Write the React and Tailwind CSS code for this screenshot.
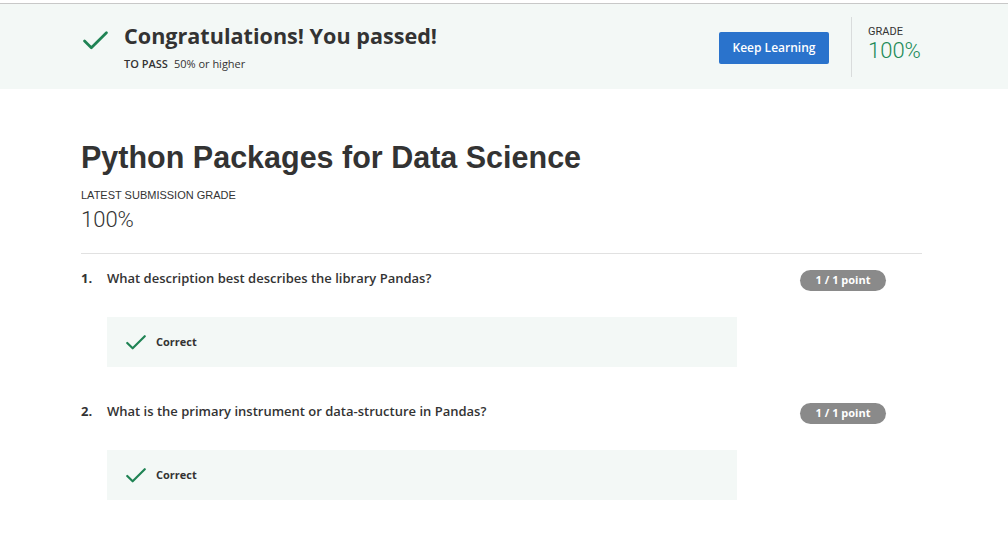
import React from 'react';

const Check = ({ className }) => (
  <svg viewBox="0 0 24 18" className={className} fill="none">
    <path d="M1.5 9.5 L8 16 L22.5 1.5" stroke="#1f8354" strokeWidth="2.6" strokeLinecap="round" strokeLinejoin="round" />
  </svg>
);

const questions = [
  { num: '1.', text: 'What description best describes the library Pandas?' },
  { num: '2.', text: 'What is the primary instrument or data-structure in Pandas?' },
];

const Question = ({ num, text }) => (
  <div className="mb-[34px]">
    <div className="flex items-start">
      <div className="w-[26px] text-[13px] leading-5 font-bold text-[#333]">{num}</div>
      <div className="flex-1 text-[13px] leading-5 font-semibold text-[#333]">{text}</div>
      <div className="mt-[2px] mr-[36px] w-[86px] h-[21px] rounded-full bg-[#8a8a8a] flex items-center justify-center text-[11px] font-bold text-white">
        1 / 1 point
      </div>
    </div>
    {/* correct answer feedback */}
    <div className="ml-[26px] mt-[26px] w-[630px] h-[50px] bg-[#f3f8f6] flex items-center pl-[19px]">
      <Check className="w-[20px] h-[15px]" />
      <span className="ml-[10px] text-[11px] font-bold text-[#333]">Correct</span>
    </div>
  </div>
);

const App = () => {
  return (
    <div className="min-h-[544px] bg-white font-['Open_Sans',sans-serif] text-[#333]">
      <div className="h-[3px] bg-white" />
      <div className="border-t border-[#c8c8c8] bg-[#f3f8f6] h-[86px]">
        <div className="ml-[81px] w-[842px] h-full flex items-center">
          <div className="flex-1 flex items-start self-start pt-[16px]">
            <Check className="w-[25px] h-[19px] mt-[11px] ml-[2px]" />
            <div className="ml-[16px]">
              <h1 className="text-[21.6px] leading-8 font-bold text-[#333]">Congratulations! You passed!</h1>
              <div className="mt-[4px] text-[11px] leading-4">
                <span className="font-semibold">TO PASS</span>
                <span className="ml-[6px]">50% or higher</span>
              </div>
            </div>
          </div>
          <button className="w-[110px] h-[32px] mt-[2px] rounded-[2px] bg-[#2a73cc] text-white text-[12px] font-semibold">
            Keep Learning
          </button>
          <div className="ml-[22px] h-[60px] border-l border-[#d9dcdc] pl-[16px] w-[72px] font-['Roboto',sans-serif]">
            <div className="mt-[8px] text-[11px] leading-[14px] text-[#333]">GRADE</div>
            <div className="text-[22px] leading-[24px] font-light text-[#218a57]">100%</div>
          </div>
        </div>
      </div>

      <div className="ml-[81px] w-[841px]">
        <h2 className="mt-[50px] text-[30.5px] leading-9 font-bold font-['Liberation_Sans',Arial,sans-serif] text-[#333]">
          Python Packages for Data Science
        </h2>
        <div className="mt-[12px] text-[11px] leading-4 font-['Liberation_Sans',Arial,sans-serif] text-[#333]">LATEST SUBMISSION GRADE</div>
        <div className="mt-[3px] text-[22px] leading-7 font-light font-['Roboto',sans-serif] text-[#333]">100%</div>
        <div className="mt-[19px] border-t border-[#e1e1e1]" />
        <div className="pt-[14px]">
          {questions.map((q) => (
            <Question key={q.num} num={q.num} text={q.text} />
          ))}
        </div>
      </div>
    </div>
  );
};

export default App;
